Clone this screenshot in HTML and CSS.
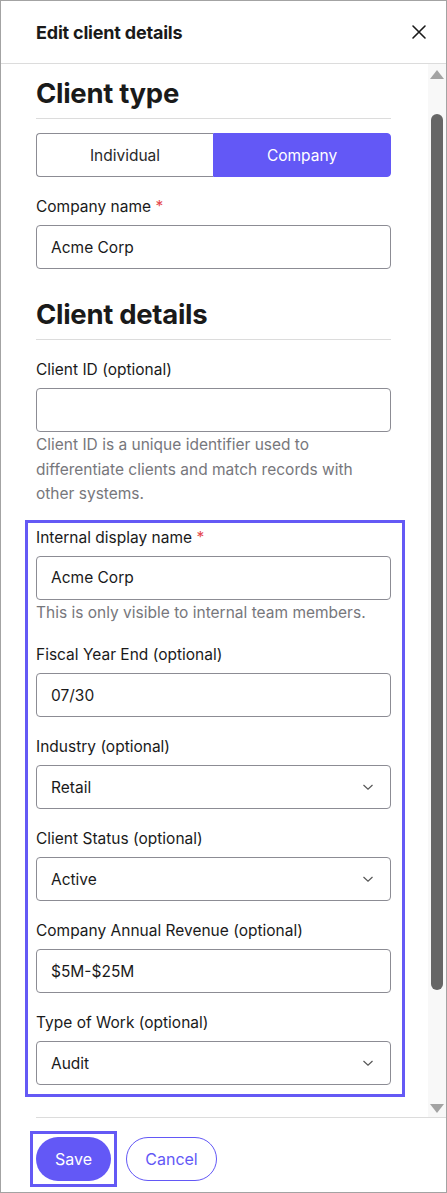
FILE: index.html
```html
<!DOCTYPE html>
<html lang="en">
<head>
    <meta charset="UTF-8">
    <meta name="viewport" content="width=device-width, initial-scale=1.0">
    <title>Edit client details</title>
    <link rel="stylesheet" href="styles.css">
</head>
<body>
    <div class="modal">
        <div class="modal-header">
            <h2 class="modal-title">Edit client details</h2>
            <button class="close-btn" aria-label="Close">
                <svg width="16" height="16" viewBox="0 0 16 16"><path d="M2 2L14 14M14 2L2 14" stroke="#1a1a1a" stroke-width="1.6" stroke-linecap="round"/></svg>
            </button>
        </div>

        <div class="modal-body">
            <div class="scroll-content">
                <h3 class="section-title">Client type</h3>
                <div class="segmented">
                    <button class="seg">Individual</button>
                    <button class="seg active">Company</button>
                </div>

                <div class="field">
                    <label class="label">Company name <span class="req">*</span></label>
                    <div class="input">Acme Corp</div>
                </div>

                <h3 class="section-title second">Client details</h3>

                <div class="field">
                    <label class="label">Client ID (optional)</label>
                    <div class="input"></div>
                    <p class="hint">Client ID is a unique identifier used to differentiate clients and match records with other systems.</p>
                </div>

                <div class="focus-group">
                    <div class="field first">
                        <label class="label">Internal display name <span class="req">*</span></label>
                        <div class="input">Acme Corp</div>
                        <p class="hint">This is only visible to internal team members.</p>
                    </div>
                    <div class="field">
                        <label class="label">Fiscal Year End (optional)</label>
                        <div class="input">07/30</div>
                    </div>
                    <div class="field">
                        <label class="label">Industry (optional)</label>
                        <div class="input select">Retail <svg class="chev" width="12" height="8" viewBox="0 0 12 8"><path d="M1.5 2L6 6.2L10.5 2" fill="none" stroke="#555" stroke-width="1.2"/></svg></div>
                    </div>
                    <div class="field">
                        <label class="label">Client Status (optional)</label>
                        <div class="input select">Active <svg class="chev" width="12" height="8" viewBox="0 0 12 8"><path d="M1.5 2L6 6.2L10.5 2" fill="none" stroke="#555" stroke-width="1.2"/></svg></div>
                    </div>
                    <div class="field">
                        <label class="label">Company Annual Revenue (optional)</label>
                        <div class="input">$5M-$25M</div>
                    </div>
                    <div class="field">
                        <label class="label">Type of Work (optional)</label>
                        <div class="input select">Audit <svg class="chev" width="12" height="8" viewBox="0 0 12 8"><path d="M1.5 2L6 6.2L10.5 2" fill="none" stroke="#555" stroke-width="1.2"/></svg></div>
                    </div>
                </div>
            </div>

            <div class="scrollbar">
                <div class="arrow up"></div>
                <div class="thumb"></div>
                <div class="arrow down"></div>
            </div>
        </div>

        <div class="modal-footer">
            <span class="focus-ring"><button class="btn primary">Save</button></span>
            <button class="btn outline">Cancel</button>
        </div>
    </div>
</body>
</html>
```

FILE: styles.css
```css
* {
    box-sizing: border-box;
}
body {
    margin: 0;
    font-family: Inter, "Noto Sans", sans-serif;
    color: #1a1a1a;
    background: #fff;
}
.modal {
    width: 447px;
    height: 1193px;
    border: 1px solid #a3a3a3;
    display: flex;
    flex-direction: column;
    overflow: hidden;
}
.modal-header {
    height: 63px;
    flex-shrink: 0;
    display: flex;
    align-items: center;
    justify-content: space-between;
    padding: 0 19px 0 35px;
    border-bottom: 1px solid #dcdcdc;
}
.modal-title {
    margin: 0;
    font-size: 18px;
    font-weight: 700;
    letter-spacing: -0.2px;
}
.close-btn {
    border: none;
    background: none;
    padding: 0;
    width: 16px;
    height: 16px;
    display: flex;
}
.modal-body {
    flex: 1;
    display: flex;
    min-height: 0;
}
.scroll-content {
    flex: 1;
    padding: 13px 37px 0 35px;
    overflow: hidden;
}
.section-title {
    margin: 0;
    font-size: 27.5px;
    line-height: 32px;
    font-weight: 700;
    letter-spacing: -0.3px;
    padding-bottom: 9px;
    border-bottom: 1px solid #dcdcdc;
}
.section-title.second {
    margin-top: 29px;
}
.segmented {
    display: flex;
    margin-top: 14px;
    height: 44px;
}
.seg {
    flex: 1;
    font-family: inherit;
    font-size: 15.5px;
    color: #2a2a2a;
    background: #fff;
    border: 1px solid #8c8c94;
    border-right: none;
    border-radius: 4px 0 0 4px;
}
.seg.active {
    background: #6358f6;
    color: #fff;
    border: 1px solid #6358f6;
    border-radius: 0 4px 4px 0;
}
.field {
    margin-top: 18px;
}
.field.first {
    margin-top: 0;
}
.label {
    display: block;
    font-size: 15.5px;
    line-height: 24px;
    margin-bottom: 6px;
}
.req {
    color: #e5484d;
}
.input {
    height: 44px;
    border: 1px solid #8c8c94;
    border-radius: 4px;
    padding: 0 14px;
    font-size: 15.5px;
    display: flex;
    align-items: center;
    justify-content: space-between;
}
.chev {
    margin-right: 2px;
}
.hint {
    margin: 1px 0 0;
    font-size: 15.5px;
    line-height: 24.5px;
    color: #77777c;
}
.focus-group {
    margin: 13px -14px 0 -11px;
    border: 3px solid #6459f5;
    padding: 3px 11px 9px 8px;
}
.scrollbar {
    width: 18px;
    flex-shrink: 0;
    background: #f8f8f8;
    display: flex;
    flex-direction: column;
    align-items: center;
    padding: 6px 0 4px;
}
.arrow {
    width: 0;
    height: 0;
    border-left: 7px solid transparent;
    border-right: 7px solid transparent;
}
.arrow.up {
    border-bottom: 9px solid #a3a3a3;
}
.arrow.down {
    border-top: 9px solid #a3a3a3;
    margin-top: auto;
}
.thumb {
    width: 12px;
    height: 876px;
    margin-top: 35px;
    background: #666;
    border-radius: 6px;
}
.modal-footer {
    flex-shrink: 0;
    height: 75px;
    margin-left: 35px;
    border-top: 1px solid #dcdcdc;
    display: flex;
    align-items: flex-start;
    gap: 9px;
    padding-top: 13px;
}
.focus-ring {
    display: flex;
    border: 3px solid #6459f5;
    padding: 3px;
    margin-left: -6px;
}
.btn {
    height: 44px;
    border-radius: 22px;
    font-family: inherit;
    font-size: 16px;
    padding: 0;
}
.btn.primary {
    background: #6358f6;
    color: #fff;
    border: none;
    width: 75px;
}
.btn.outline {
    background: #fff;
    color: #6358f6;
    border: 1px solid #6358f6;
    width: 91px;
    margin-top: 6px;
}
```
